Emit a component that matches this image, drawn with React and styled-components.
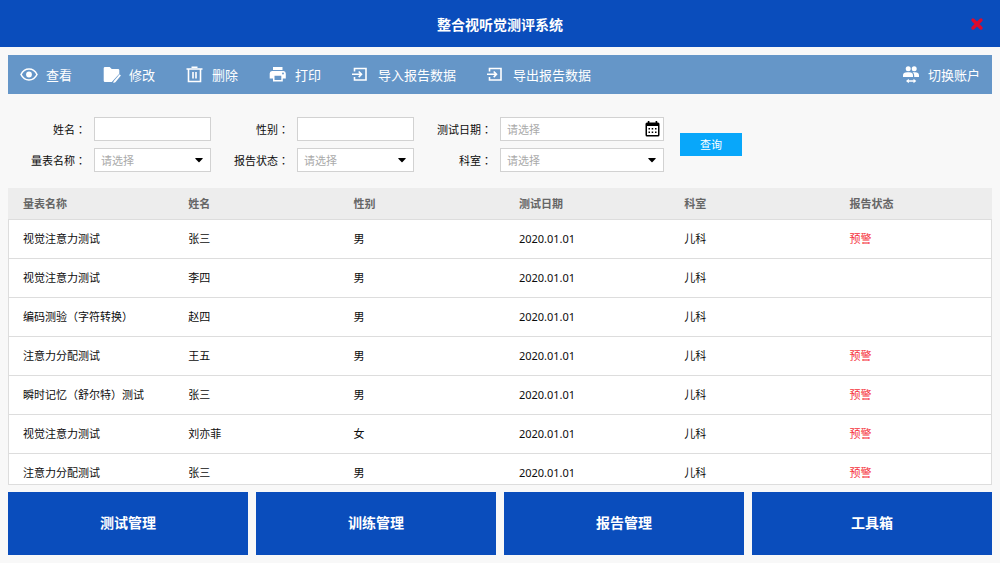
import styled, { createGlobalStyle } from "styled-components"

const GlobalStyle = createGlobalStyle`
  * {
    box-sizing: border-box;
  }

  body {
    margin: 0;
    background-color: #f8f8f8;
    color: #0c0c0c;
    font-family: "Noto Sans", "Noto Sans CJK SC", sans-serif;
    font-size: 11px;
  }

  button, input, select {
    font-family: inherit;
    font-size: inherit;
  }
`

const Page = styled.div`
  display: flex;
  flex-direction: column;
  height: 100vh;
`

const Header = styled.header`
  display: grid;
  grid-template-columns: 1fr auto 1fr;
  align-items: center;
  height: 47px;
  padding: 0 16px;
  background-color: #0a4dbc;
  color: #ffffff;
`

const Title = styled.h1`
  grid-column: 2;
  margin: 0;
  padding-top: 2px;
  font-size: 14px;
  font-weight: 700;
  line-height: 20px;
`

const CloseButton = styled.button`
  display: flex;
  justify-self: end;
  padding: 0;
  border: none;
  background: none;
  color: #dd0a2c;
  cursor: pointer;
`

const Toolbar = styled.nav`
  display: flex;
  align-items: center;
  gap: 31px;
  height: 39px;
  margin: 8px 8px 0;
  padding: 0 12px;
  background-color: #6596c8;
`

const ToolButton = styled.button`
  display: flex;
  align-items: center;
  gap: 8px;
  margin-left: ${(props) => (props.$end ? "auto" : "0")};
  padding: 0;
  border: none;
  background: none;
  color: #ffffff;
  font-size: 13px;
  line-height: 20px;
  cursor: pointer;
`

const Search = styled.form`
  display: flex;
  align-items: center;
  gap: 16px;
  padding: 23px 8px 16px 31px;
`

const Fields = styled.div`
  display: grid;
  grid-template-columns: 180px 180px 227px;
  gap: 7px 23px;
`

const Field = styled.div`
  display: flex;
  align-items: center;
  gap: 8px;
`

const Label = styled.label`
  width: 55px;
  line-height: 16px;
  text-align: right;
  white-space: nowrap;
`

const Colon = styled.span`
  font-family: "Noto Sans CJK TC", sans-serif;
`

const Control = styled.div`
  position: relative;
  flex: 1;

  svg {
    position: absolute;
    top: 50%;
    right: ${(props) => (props.$date ? "4px" : "8px")};
    transform: translateY(-50%);
    pointer-events: none;
  }
`

const Input = styled.input`
  display: block;
  width: 100%;
  height: 24px;
  padding: 0 6px;
  border: 1px solid #d2d2d2;
  border-radius: 0;
  background-color: #ffffff;

  &::placeholder {
    color: #aaaaaa;
  }
`

const Select = styled.select`
  display: block;
  width: 100%;
  height: 24px;
  padding: 0 6px;
  border: 1px solid #d2d2d2;
  border-radius: 0;
  background-color: #ffffff;
  color: #aaaaaa;
  appearance: none;
`

const SearchButton = styled.button`
  width: 62px;
  height: 23px;
  padding: 0 0 2px;
  border: none;
  background-color: #08a7fa;
  color: #ffffff;
  cursor: pointer;
`

const TablePanel = styled.main`
  flex: 1;
  min-height: 0;
  margin: 0 8px;
  border-bottom: 1px solid #dddddd;
  background-color: #ffffff;
  overflow-y: auto;
  scrollbar-width: none;
`

const Table = styled.table`
  width: 100%;
  border-spacing: 0;
  table-layout: fixed;
  line-height: 16px;
`

const HeadCell = styled.th`
  width: ${(props) => props.$width};
  height: 32px;
  padding: 0 0 0 15px;
  border-bottom: 1px solid #dddddd;
  background-color: #ededed;
  color: #666666;
  font-weight: 700;
  text-align: left;
`

const Cell = styled.td`
  height: 39px;
  padding: 0 0 0 15px;
  border-bottom: 1px solid #dddddd;
  color: ${(props) => (props.$warning ? "#f5323c" : "inherit")};

  &:first-child {
    padding-left: 14px;
    border-left: 1px solid #dddddd;
  }

  &:last-child {
    border-right: 1px solid #dddddd;
  }
`

const Footer = styled.footer`
  display: grid;
  grid-template-columns: repeat(4, 1fr);
  gap: 8px;
  padding: 7px 8px 8px;
`

const ModuleButton = styled.button`
  height: 63px;
  padding: 0 0 3px;
  border: none;
  background-color: #0a4dbc;
  color: #ffffff;
  font-size: 14px;
  font-weight: 700;
  cursor: pointer;
`

const CloseIcon = () => (
  <svg width="14" height="14" viewBox="0 0 14 14" stroke="currentColor" strokeWidth="3.4" strokeLinecap="round">
    <path d="M3 3l8 8M11 3l-8 8" />
  </svg>
)

const EyeIcon = () => (
  <svg width="18" height="18" viewBox="0 0 18 18" fill="none">
    <path d="M1 8.500C2.800 4.900 5.600 3 9 3S15.200 4.900 17 8.500C15.200 12.100 12.400 14 9 14S2.800 12.100 1 8.500Z" stroke="currentColor" strokeWidth="1.600" />
    <circle cx="9" cy="8.500" r="2.900" fill="currentColor" />
  </svg>
)

const EditIcon = () => (
  <svg width="18" height="18" viewBox="0 0 18 18" fill="currentColor">
    <path d="M2 1h4.700l2 2h6.300q1.300 0 1.300 1.300v3.400L8.800 16H2Q.7 16 .7 14.700V2.300Q.7 1 2 1Z" />
    <path d="M16.600 8.300l1.300 1.200-5.500 6.700-2.300.8.700-2.100Z" />
  </svg>
)

const TrashIcon = () => (
  <svg width="18" height="18" viewBox="0 0 18 18" fill="none" stroke="currentColor" strokeWidth="1.600">
    <path d="M.5 3h16M5.500 1.200h6M2.500 3v12.500h12V3M7 6v6.500M10 6v6.500" />
  </svg>
)

const PrintIcon = () => (
  <svg width="18" height="18" viewBox="0 0 18 18" fill="currentColor">
    <path d="M4 1h9.500v3H4Z" />
    <path fillRule="evenodd" d="M3 5h11.500Q16.800 5 16.800 7.500V12.500h-3v3H4v-3H.7V7.500Q.7 5 3 5ZM5.500 9.800v4.200h6.800V9.800ZM14 6.600a.9.900 0 1 0 0 1.800.9.900 0 1 0 0-1.800Z" />
  </svg>
)

const TransferIcon = () => (
  <svg width="18" height="18" viewBox="0 0 18 18" fill="none" stroke="currentColor" strokeWidth="1.600">
    <path d="M2.500 5.500V2.500h11.500v11.500H2.500V11" />
    <path d="M0 8.300h9M6.700 5.500l2.800 2.800-2.800 2.800" />
  </svg>
)

const SwitchUserIcon = () => (
  <svg width="18" height="18" viewBox="0 0 18 18" fill="currentColor">
    <circle cx="6.200" cy="2.700" r="2.500" />
    <circle cx="12.200" cy="2.700" r="2.500" />
    <path d="M1 11V9.500Q1 6.200 5.200 6.200h2q3.800 0 3.800 3.300V11Z" />
    <path d="M10.500 6.200H13q4 0 4 3.300V11h-4.800V9.500q0-2.200-1.700-3.300Z" />
    <path d="M4 15l2.800-2.200v1.500h4.700v-1.500L14.300 15l-2.800 2.200v-1.500H6.800v1.500Z" />
  </svg>
)

const CaretIcon = () => (
  <svg width="8" height="6" viewBox="0 0 8 6" fill="#000000">
    <path d="M.6 1h6.800q.6.100.2.700L4.500 5.100q-.5.500-1 0L.4 1.700Q0 1.100.6 1Z" />
  </svg>
)

const CalendarIcon = () => (
  <svg width="15" height="16" viewBox="0 0 15 16" fill="#000000">
    <path fillRule="evenodd" d="M2 1.500h11q1.500 0 1.500 1.500v11q0 1.500-1.500 1.500H2Q.5 15.500.5 14V3Q.5 1.500 2 1.500ZM2 5v9h11V5Z" />
    <path d="M2.800 0h1.600v3H2.800ZM10.600 0h1.600v3h-1.600Z" />
    <path d="M3.500 7H5v1.500H3.500ZM6.700 7h1.500v1.500H6.700ZM10 7h1.500v1.500H10ZM3.500 10.500H5V12H3.500ZM6.700 10.500h1.500V12H6.700ZM10 10.500h1.500V12H10Z" />
  </svg>
)

const tools = [
  { name: "查看", Icon: EyeIcon },
  { name: "修改", Icon: EditIcon },
  { name: "删除", Icon: TrashIcon },
  { name: "打印", Icon: PrintIcon },
  { name: "导入报告数据", Icon: TransferIcon },
  { name: "导出报告数据", Icon: TransferIcon },
  { name: "切换账户", Icon: SwitchUserIcon, end: true },
]

const fields = [
  { id: "name", label: "姓名", type: "text" },
  { id: "gender", label: "性别", type: "text" },
  { id: "date", label: "测试日期", type: "date" },
  { id: "scale", label: "量表名称", type: "select", options: ["视觉注意力测试", "注意力分配测试"] },
  { id: "status", label: "报告状态", type: "select", options: ["预警"] },
  { id: "department", label: "科室", type: "select", options: ["儿科"] },
]

const columns = ["量表名称", "姓名", "性别", "测试日期", "科室", "报告状态"]

const records = [
  ["视觉注意力测试", "张三", "男", "2020.01.01", "儿科", "预警"],
  ["视觉注意力测试", "李四", "男", "2020.01.01", "儿科", ""],
  ["编码测验（字符转换）", "赵四", "男", "2020.01.01", "儿科", ""],
  ["注意力分配测试", "王五", "男", "2020.01.01", "儿科", "预警"],
  ["瞬时记忆（舒尔特）测试", "张三", "男", "2020.01.01", "儿科", "预警"],
  ["视觉注意力测试", "刘亦菲", "女", "2020.01.01", "儿科", "预警"],
  ["注意力分配测试", "张三", "男", "2020.01.01", "儿科", "预警"],
]

const modules = ["测试管理", "训练管理", "报告管理", "工具箱"]

function SearchField({ id, label, type, options }) {
  return (
    <Field>
      <Label htmlFor={id}>
        {label}
        <Colon>：</Colon>
      </Label>
      <Control $date={type === "date"}>
        {type === "select" ? (
          <Select id={id} defaultValue="">
            <option value="">请选择</option>
            {options.map((option) => (
              <option key={option}>{option}</option>
            ))}
          </Select>
        ) : (
          <Input id={id} type="text" placeholder={type === "date" ? "请选择" : undefined} />
        )}
        {type === "select" && <CaretIcon />}
        {type === "date" && <CalendarIcon />}
      </Control>
    </Field>
  )
}

function App() {
  return (
    <Page>
      <GlobalStyle />
      <Header>
        <Title>整合视听觉测评系统</Title>
        <CloseButton type="button" aria-label="关闭">
          <CloseIcon />
        </CloseButton>
      </Header>
      <Toolbar>
        {tools.map(({ name, Icon, end }) => (
          <ToolButton key={name} type="button" $end={end}>
            <Icon />
            {name}
          </ToolButton>
        ))}
      </Toolbar>
      <Search onSubmit={(e) => e.preventDefault()}>
        <Fields>
          {fields.map((field) => (
            <SearchField key={field.id} {...field} />
          ))}
        </Fields>
        <SearchButton type="submit">查询</SearchButton>
      </Search>
      <TablePanel>
        <Table>
          <thead>
            <tr>
              {columns.map((column, i) => (
                <HeadCell key={column} scope="col" $width={i < columns.length - 1 ? "16.8%" : "auto"}>
                  {column}
                </HeadCell>
              ))}
            </tr>
          </thead>
          <tbody>
            {records.map((record, row) => (
              <tr key={row}>
                {record.map((value, i) => (
                  <Cell key={columns[i]} $warning={i === columns.length - 1}>
                    {value}
                  </Cell>
                ))}
              </tr>
            ))}
          </tbody>
        </Table>
      </TablePanel>
      <Footer>
        {modules.map((name) => (
          <ModuleButton key={name} type="button">
            {name}
          </ModuleButton>
        ))}
      </Footer>
    </Page>
  )
}

export default App
